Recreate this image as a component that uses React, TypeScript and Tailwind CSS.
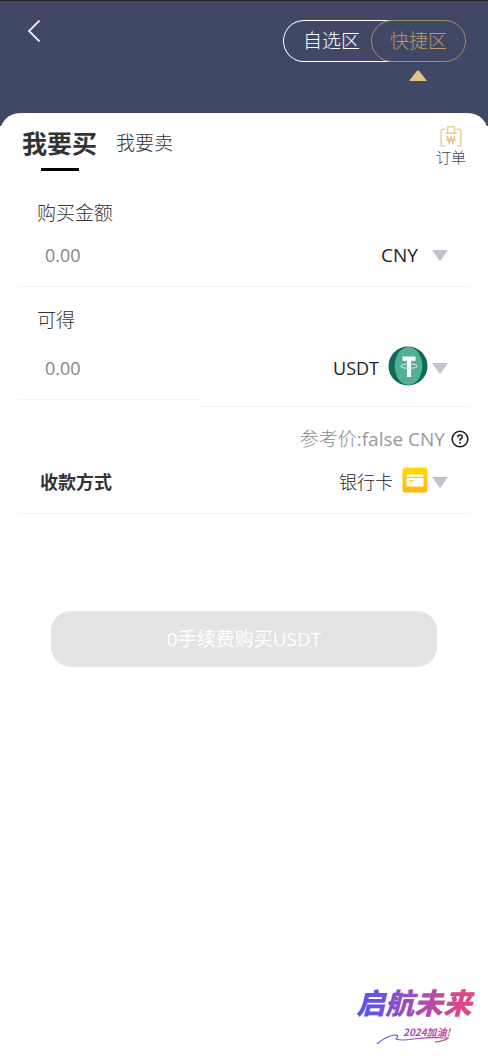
import { useState } from "react";

function Caret() {
    return (
        <svg viewBox="0 0 16 11" className="h-[11px] w-4 shrink-0" aria-hidden="true">
            <path d="M0 0h16L9 10Q8 11 7 10Z" fill="#bfc4cf" />
        </svg>
    );
}

function OrderIcon() {
    return (
        <svg viewBox="0 0 22 22" className="size-[22px]" fill="none" stroke="#e8cf9c" strokeWidth="1.6" aria-hidden="true">
            <path d="M5.500 4.300H3Q1.200 4.300 1.200 5.800V20.800H4.800M16.500 4.300h2.500q1.800 0 1.800 1.500V20.800H17.200" />
            <path d="M5 8.300H17M7.500 8V2.300Q7.500 1.800 8 1.800H14Q14.500 1.800 14.500 2.300V8" />
            <path d="M7.300 10.800L9.200 18L11 12L12.800 18L14.700 10.800M6 14.800H16" stroke="#e5c681" strokeWidth="1.400" />
        </svg>
    );
}

function TetherIcon() {
    return (
        <svg viewBox="0 0 40 40" className="mb-1 size-10 shrink-0" aria-hidden="true">
            <circle cx="20" cy="20" r="19.500" fill="#0d6b5c" />
            <ellipse cx="20.500" cy="20" rx="13.800" ry="19" fill="#53ae94" />
            <path d="M14.500 10.500H27.500v4.200h-4.400v16.300h-4.200V14.700h-4.400Z" fill="#fff" />
            <path d="M18.500 18.200Q13 18.700 13 20.300Q13.500 22.200 21 22.200T29 20.300Q29 18.700 23.500 18.200" fill="none" stroke="#c3e3d9" strokeWidth="1.200" />
        </svg>
    );
}

function CardIcon() {
    return (
        <svg viewBox="0 0 26 26" className="mb-1 size-[26px] shrink-0" aria-hidden="true">
            <defs>
                <linearGradient id="card" x1="0" y1="0" x2="0" y2="1">
                    <stop stopColor="#ffdc00" />
                    <stop offset="1" stopColor="#ffb90a" />
                </linearGradient>
            </defs>
            <rect width="25" height="25" x=".5" y=".5" rx="3" fill="url(#card)" />
            <path d="M4.500 7.500h17v2.300h-17zM4.500 11h17v8.500h-17z" fill="#fff" />
            <path d="M7.500 13.700h4M7.500 16h2.500" stroke="#ffc905" strokeWidth="1.200" />
        </svg>
    );
}

function Slogan() {
    return (
        <svg viewBox="0 0 122 70" className="h-[70px] w-[122px]" role="img" aria-label="启航未来 2024加油!">
            <defs>
                <linearGradient id="slogan" gradientUnits="userSpaceOnUse" x1="4" y1="0" x2="118" y2="0">
                    <stop stopColor="#5257f2" />
                    <stop offset=".5" stopColor="#a54bb5" />
                    <stop offset="1" stopColor="#e8467c" />
                </linearGradient>
            </defs>
            <g fill="url(#slogan)" fontFamily="'Noto Sans CJK SC', sans-serif" fontStyle="italic" fontWeight="900">
                <text x="1" y="36" fontSize="29">启航未来</text>
                <text x="48" y="58" fontSize="10" fontWeight="700">2024加油!</text>
            </g>
            <path
                d="M22 66Q31 58 40 57Q45 57 41 61Q46 63 58 61Q76 59 93 60Q90 63 80 64"
                fill="none"
                stroke="url(#slogan)"
                strokeWidth="1.200"
            />
        </svg>
    );
}

const selectClass =
    "appearance-none bg-transparent text-right leading-7 text-[#222] outline-none [field-sizing:content]";

const inputClass =
    "w-full min-w-0 bg-transparent px-[26px] text-[18px] leading-7 font-normal outline-none placeholder:text-[#858585]";

export default function App() {
    const [pay, setPay] = useState("");
    const [receive, setReceive] = useState("");

    return (
        <div className="flex min-h-screen flex-col bg-white font-['Open_Sans','Noto_Sans_CJK_SC',sans-serif] text-[19px] font-light text-[#333]">
            <header className="flex h-[126px] items-start justify-between border-t border-[#222] bg-[#404866] pt-[19px] pr-[22px] pl-[26px]">
                <button type="button" aria-label="返回">
                    <svg viewBox="0 0 16 22" className="h-[22px] w-4" fill="none" stroke="#eceef3" strokeWidth="1.800" aria-hidden="true">
                        <path d="M13.500 0.500L3 11L13.500 21.500" />
                    </svg>
                </button>
                <nav className="flex">
                    <button type="button" className="-mr-7 h-[42px] rounded-l-full border border-r-0 border-white pr-[39px] pl-[19px] text-white">
                        自选区
                    </button>
                    <div className="flex flex-col items-center gap-2">
                        <button type="button" className="h-[42px] rounded-full border border-[#a38e6c] px-[18px] text-[#b79a68]">
                            快捷区
                        </button>
                        <svg viewBox="0 0 18 11" className="h-[11px] w-[18px]" aria-hidden="true">
                            <path d="M0 11L8 .8Q9 0 10 .8L18 11Z" fill="#e5c585" />
                        </svg>
                    </div>
                </nav>
            </header>

            <main className="-mt-[13px] flex grow flex-col rounded-t-[20px] bg-white px-[19px]">
                <div className="flex items-start justify-between pt-3">
                    <div className="flex items-center gap-[19px] pl-[3px]">
                        <button type="button" className="flex flex-col items-center text-[25px] leading-9 font-bold">
                            我要买
                            <span className="mt-[7px] h-[3px] w-[38px] bg-black" />
                        </button>
                        <button type="button" className="pb-[10px] leading-9">
                            我要卖
                        </button>
                    </div>
                    <a href="#orders" className="flex flex-col items-center pr-[3px] text-[15px] leading-5 text-[#404866]">
                        <OrderIcon />
                        订单
                    </a>
                </div>

                <section className="pt-7">
                    <label htmlFor="pay" className="block pl-[18px] leading-7">
                        购买金额
                    </label>
                    <div className="mt-[14px] flex items-center border-b border-[#f4f4f4] pr-[21px] pb-[17px]">
                        <input id="pay" value={pay} onChange={(e) => setPay(e.target.value)} placeholder="0.00" className={inputClass} />
                        <select aria-label="法币" className={`${selectClass} mr-[14px] font-normal`}>
                            <option>CNY</option>
                        </select>
                        <Caret />
                    </div>
                </section>

                <section className="pt-[19px]">
                    <label htmlFor="receive" className="block pl-[18px] leading-7">
                        可得
                    </label>
                    <div className="flex items-start">
                        <div className="w-2/5 border-b border-[#f4f4f4] pt-5 pb-4">
                            <input id="receive" value={receive} onChange={(e) => setReceive(e.target.value)} placeholder="0.00" className={inputClass} />
                        </div>
                        <div className="flex grow items-center justify-end border-b border-[#f4f4f4] pt-3 pr-[21px] pb-4 text-[18px]">
                            <select aria-label="币种" className={`${selectClass} mr-[9px] font-normal`}>
                                <option>USDT</option>
                            </select>
                            <TetherIcon />
                            <span className="ml-1">
                                <Caret />
                            </span>
                        </div>
                    </div>
                </section>

                <p className="mt-[18px] flex items-center justify-end gap-[6px] leading-7 text-[#8c8c8c]">
                    <span>
                        参考价<span className="font-normal text-[#999]">:false CNY</span>
                    </span>
                    <svg viewBox="0 0 18 18" className="size-[18px]" fill="none" stroke="#222" strokeWidth="1.600" aria-hidden="true">
                        <circle cx="9" cy="9" r="7.800" />
                        <path d="M6.700 7.300Q6.700 5 9 5T11.300 7Q11.300 8.300 9 9.500V10.800M9 12v1.800" />
                    </svg>
                </p>

                <div className="mt-[14px] flex items-center border-b border-[#f4f4f4] pr-[21px] pb-4 text-[18px]">
                    <label htmlFor="method" className="grow pl-[21px] leading-7 font-bold">
                        收款方式
                    </label>
                    <select id="method" className={`${selectClass} mr-[9px]`}>
                        <option>银行卡</option>
                    </select>
                    <CardIcon />
                    <span className="ml-1">
                        <Caret />
                    </span>
                </div>

                <button type="button" className="mx-8 mt-[97px] h-14 rounded-[20px] bg-[#e4e4e4] font-normal text-white">
                    0手续费购买USDT
                </button>

                <div className="mt-auto -mr-2 flex justify-end pb-2">
                    <Slogan />
                </div>
            </main>
        </div>
    );
}
